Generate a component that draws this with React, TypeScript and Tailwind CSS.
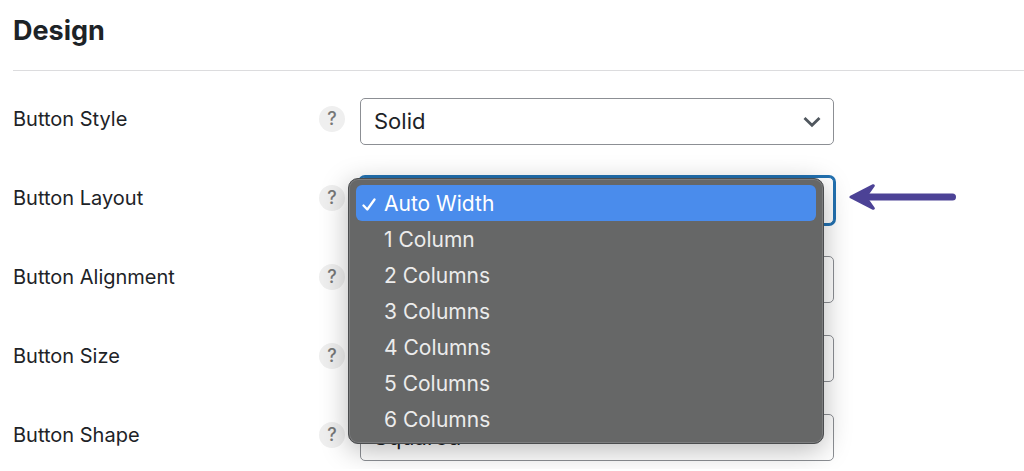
import React, { useState } from "react";
import clsx from "clsx";

interface Field {
  id: string;
  label: string;
  options: string[];
}

const fields: Field[] = [
  { id: "style", label: "Button Style", options: ["Solid"] },
  {
    id: "layout",
    label: "Button Layout",
    options: [
      "Auto Width",
      "1 Column",
      "2 Columns",
      "3 Columns",
      "4 Columns",
      "5 Columns",
      "6 Columns",
    ],
  },
  { id: "alignment", label: "Button Alignment", options: ["Left"] },
  { id: "size", label: "Button Size", options: ["Medium"] },
  { id: "shape", label: "Button Shape", options: ["Squared"] },
];

const HelpButton: React.FC<{ label: string }> = ({ label }) => (
  <button
    type="button"
    aria-label={`Help: ${label}`}
    className="flex size-[26px] items-center justify-center rounded-full bg-[#efefef] text-lg leading-none font-medium text-[#777]"
  >
    ?
  </button>
);

const CheckMark: React.FC = () => (
  <svg width="16" height="18" viewBox="0 0 16 18" fill="none" aria-hidden="true">
    <path
      d="M1.500 11.500 5.300 15.500 12.500 5.500"
      stroke="currentColor"
      strokeWidth="2.300"
      strokeLinecap="round"
      strokeLinejoin="round"
    />
  </svg>
);

const Chevron: React.FC = () => (
  <svg
    width="18"
    height="12"
    viewBox="0 0 18 12"
    fill="none"
    aria-hidden="true"
    className="pointer-events-none absolute top-[18px] right-[13px] text-[#50575e]"
  >
    <path d="M1.500 2 9 9.300 16.500 2" stroke="currentColor" strokeWidth="2.800" />
  </svg>
);

const Arrow: React.FC = () => (
  <svg width="108" height="28" viewBox="0 0 108 28" fill="#4c4296" aria-hidden="true">
    <path d="M20 14H103.500" stroke="#4c4296" strokeWidth="7" strokeLinecap="round" />
    <path
      d="M2 14 24.300 2.700 18.500 11V17L24.300 25.300Z"
      stroke="#4c4296"
      strokeWidth="3"
      strokeLinejoin="round"
    />
  </svg>
);

interface MenuProps {
  options: string[];
  value: string;
  onPick: (value: string) => void;
}

const OptionMenu: React.FC<MenuProps> = ({ options, value, onPick }) => (
  <div
    role="listbox"
    aria-label="Button Layout"
    className="absolute top-px right-2.5 -left-3 z-10 rounded-[10px] border border-[#4a4c4e] bg-[#666767] px-[7px] py-1.5 shadow-[0_6px_28px_rgba(0,0,0,0.28),inset_0_0_0_1px_#7c7d7e]"
  >
    {options.map((option) => (
      <button
        key={option}
        type="button"
        role="option"
        aria-selected={option === value}
        onClick={() => onPick(option)}
        className={clsx(
          "flex h-9 w-full items-center gap-1.5 rounded-md px-1.5 text-left text-[21px] leading-none",
          option === value ? "bg-[#4a8cec] text-white" : "text-[#ececec]"
        )}
      >
        <span className="w-4">{option === value && <CheckMark />}</span>
        {option}
      </button>
    ))}
  </div>
);

const App: React.FC = () => {
  const [layout, setLayout] = useState("Auto Width");

  return (
    <main className="bg-white pl-[13px] font-['Inter',sans-serif] text-[#1d2327]">
      <h1 className="border-b border-[#dcdcde] pt-3 pb-5 text-[27px] leading-[38px] font-bold">
        Design
      </h1>

      <form className="flex flex-col gap-8 pt-[27px] pb-2">
        {fields.map((field) => {
          const open = field.id === "layout";
          return (
            <div key={field.id} className="flex items-center">
              <div className="flex w-[332px] shrink-0 items-center justify-between pb-1.5">
                <label htmlFor={field.id} className="text-xl leading-7">
                  {field.label}
                </label>
                <HelpButton label={field.label} />
              </div>

              <div className="relative ml-[15px] max-w-[474px] flex-1">
                <select
                  id={field.id}
                  value={open ? layout : undefined}
                  onChange={(e) => open && setLayout(e.target.value)}
                  className={clsx(
                    "block h-[47px] w-full appearance-none rounded-[5px] border bg-white px-[13px] text-[22px]",
                    open
                      ? "border-[#2271b1] ring-2 ring-[#2271b1]"
                      : "border-[#8c8f94]"
                  )}
                >
                  {field.options.map((option) => (
                    <option key={option}>{option}</option>
                  ))}
                </select>
                <Chevron />
                {open && (
                  <OptionMenu
                    options={field.options}
                    value={layout}
                    onPick={setLayout}
                  />
                )}
              </div>

              {open && (
                <div className="ml-[15px] pb-2">
                  <Arrow />
                </div>
              )}
            </div>
          );
        })}
      </form>
    </main>
  );
};

export default App;
